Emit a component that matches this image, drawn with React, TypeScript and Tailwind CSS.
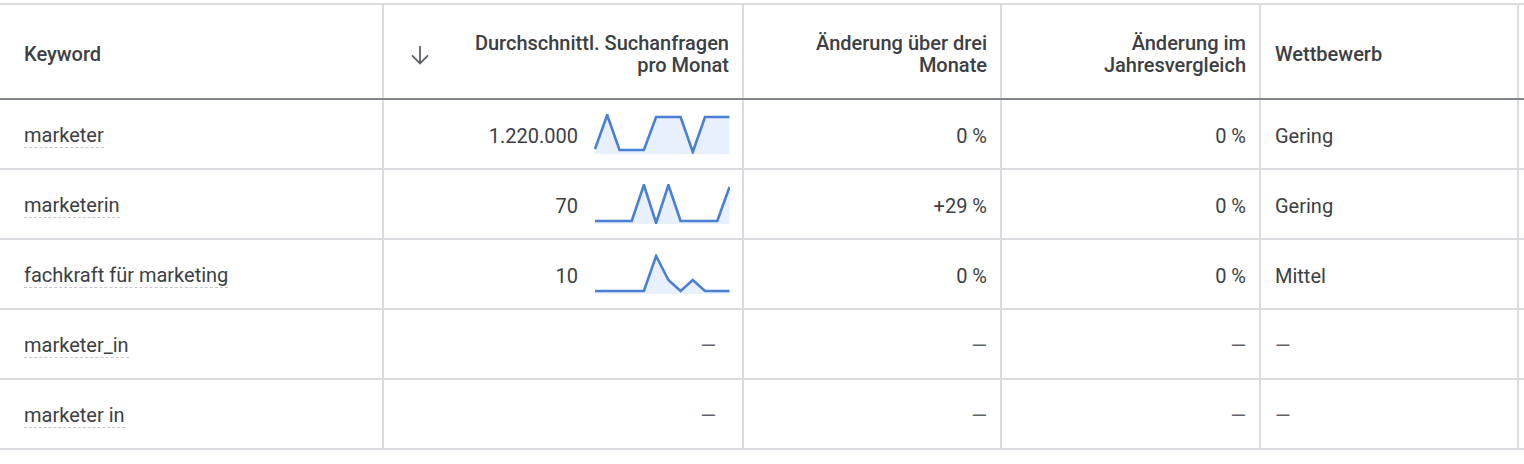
import React from 'react'

type Row = {
  keyword: string
  volume?: string
  trend?: number[]
  threeMonths?: string
  yoy?: string
  competition?: string
}

const rows: Row[] = [
  {
    keyword: 'marketer',
    volume: '1.220.000',
    trend: [35, 1, 36, 36, 36, 3, 3, 3, 38, 3, 3, 3],
    threeMonths: '0 %',
    yoy: '0 %',
    competition: 'Gering',
  },
  {
    keyword: 'marketerin',
    volume: '70',
    trend: [37, 37, 37, 37, 1, 39, 1, 37, 37, 37, 37, 3],
    threeMonths: '+29 %',
    yoy: '0 %',
    competition: 'Gering',
  },
  {
    keyword: 'fachkraft für marketing',
    volume: '10',
    trend: [37, 37, 37, 37, 37, 2, 26, 37, 26, 37, 37, 37],
    threeMonths: '0 %',
    yoy: '0 %',
    competition: 'Mittel',
  },
  { keyword: 'marketer_in' },
  { keyword: 'marketer in' },
]

const grid = 'grid grid-cols-[384px_360px_258px_259px_258px_5px]'
const cell = 'border-r-2 border-[#dadce0] flex items-center'

function Sparkline({ values }: { values: number[] }) {
  const step = 134.5 / (values.length - 1)
  const pts = values.map((v, i) => `${(i * step + 1).toFixed(1)},${v}`)
  return (
    <svg width="136" height="40" viewBox="0 0 136 40" className="shrink-0 -mt-[4px]">
      <polygon points={`1,40 ${pts.join(' ')} 135.5,40`} fill="#e8f0fd" />
      <polyline
        points={pts.join(' ')}
        fill="none"
        stroke="#4a80d3"
        strokeWidth="2.6"
        strokeLinejoin="miter"
      />
    </svg>
  )
}

function Dash() {
  return <span className="text-[#5f6368]">—</span>
}

export default function App() {
  return (
    <div className="w-[1524px] h-[464px] bg-white pt-[3px] font-['Roboto','Liberation_Sans',sans-serif] text-[20px] text-[#3c4043] antialiased">
      <div className="border-t-2 border-[#dadce0]">
        {/* Header */}
        <div className={`${grid} h-[95px] border-b-2 border-[#80868b] font-medium leading-[22px] text-[#3c4043]`}>
          <div className={`${cell} pl-6 pt-[4px]`}>Keyword</div>
          <div className={`${cell} justify-between pl-[24px] pr-[13px] pt-[4px]`}>
            <svg width="24" height="24" viewBox="0 0 24 24" className="shrink-0 mt-[2px]">
              <path
                d="M12 3v17.2M4 12.4l8 8 8-8"
                fill="none"
                stroke="#5f6368"
                strokeWidth="1.8"
              />
            </svg>
            <div className="text-right">
              Durchschnittl. Suchanfragen
              <br />
              pro Monat
            </div>
          </div>
          <div className={`${cell} justify-end pr-[13px] pt-[4px] text-right`}>
            Änderung über drei
            <br />
            Monate
          </div>
          <div className={`${cell} justify-end pr-[13px] pt-[4px] text-right`}>
            Änderung im
            <br />
            Jahresvergleich
          </div>
          <div className={`${cell} pl-[14px] pt-[4px]`}>Wettbewerb</div>
          <div />
        </div>

        {/* Body */}
        {rows.map((r) => (
          <div key={r.keyword} className={`${grid} h-[70px] border-b-2 border-[#dadce0] leading-[22px]`}>
            <div className={`${cell} pl-6 pt-[4px]`}>
              <span className="border-b border-dashed border-[#c4c7cc] pb-[1px]">{r.keyword}</span>
            </div>
            <div className={`${cell} justify-end pr-[12px] pt-[4px] gap-4`}>
              {r.volume ? (
                <>
                  <span>{r.volume}</span>
                  <Sparkline values={r.trend!} />
                </>
              ) : (
                <span className="mr-[14px]">
                  <Dash />
                </span>
              )}
            </div>
            <div className={`${cell} justify-end pr-[13px] pt-[4px]`}>{r.threeMonths ?? <Dash />}</div>
            <div className={`${cell} justify-end pr-[13px] pt-[4px]`}>{r.yoy ?? <Dash />}</div>
            <div className={`${cell} pl-[14px] pt-[4px]`}>{r.competition ?? <Dash />}</div>
            <div />
          </div>
        ))}
      </div>
    </div>
  )
}
